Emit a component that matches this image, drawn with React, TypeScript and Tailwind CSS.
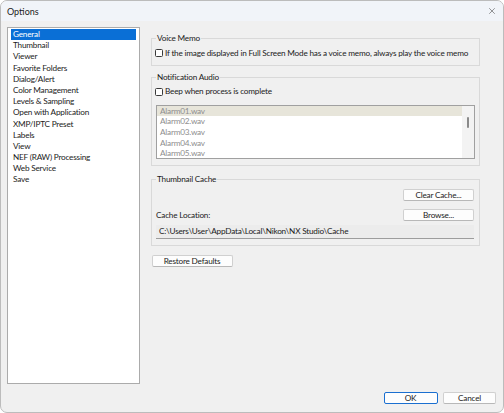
import { X } from "lucide-react";

const categories = [
  "General",
  "Thumbnail",
  "Viewer",
  "Favorite Folders",
  "Dialog/Alert",
  "Color Management",
  "Levels & Sampling",
  "Open with Application",
  "XMP/IPTC Preset",
  "Labels",
  "View",
  "NEF (RAW) Processing",
  "Web Service",
  "Save",
];

const alarms = ["Alarm01.wav", "Alarm02.wav", "Alarm03.wav", "Alarm04.wav", "Alarm05.wav"];

function Checkbox({ label }: { label: string }) {
  return (
    <label className="flex items-center gap-[2px] h-[11px] whitespace-nowrap">
      <span className="w-[8px] h-[8px] rounded-[1.5px] border border-[#3a3a3a] bg-white shrink-0" />
      <span>{label}</span>
    </label>
  );
}

function Button({ children, className = "", primary = false }: { children: string; className?: string; primary?: boolean }) {
  return (
    <button
      className={`h-[12px] flex items-center justify-center rounded-[2px] bg-[#fdfdfd] text-[8.2px] leading-none ${
        primary ? "border border-[#1a6fd0]" : "border border-[#d0d0d0] border-b-[#b8b8b8]"
      } ${className}`}
    >
      {children}
    </button>
  );
}

export default function App() {
  return (
    <div className="w-[504px] h-[413px] flex flex-col bg-[#f0f0f0] border border-[#bcbcbc] rounded-[7px] overflow-hidden text-[8.2px] leading-[11px] tracking-[-0.2px] text-[#1b1b1b] font-['Lato',sans-serif]">
      {/* title bar */}
      <div className="h-[20px] shrink-0 flex items-center justify-between pl-[6px] pr-[6px] bg-[#f1f4f9]">
        <span className="text-[9px] tracking-normal">Options</span>
        <X className="w-[10px] h-[10px] text-[#333]" strokeWidth={1.2} />
      </div>

      <div className="flex pl-[6px] pt-[6px]">
        {/* category list */}
        <div className="w-[133px] h-[357px] border border-[#ababab] bg-white px-[3px] pt-[1px]">
          {categories.map((c, i) => (
            <div
              key={c}
              className={`h-[11.2px] leading-[11.2px] px-[2px] ${i === 0 ? "bg-[#0a6fd6] text-white" : ""}`}
            >
              {c}
            </div>
          ))}
        </div>

        {/* settings */}
        <div className="ml-[11px] w-[329px] flex flex-col">
          <fieldset className="mt-[5.5px] border border-[#d9d9d9] pl-[3px] pr-[4px] pb-[6px]">
            <legend className="ml-[1px] px-[1px] leading-[11px]">Voice Memo</legend>
            <div className="mt-[4px]">
              <Checkbox label="If the image displayed in Full Screen Mode has a voice memo, always play the voice memo" />
            </div>
          </fieldset>

          <fieldset className="mt-[6px] border border-[#d9d9d9] pl-[3px] pr-[4px] pb-[6px]">
            <legend className="ml-[1px] px-[1px] leading-[11px]">Notification Audio</legend>
            <div className="mt-[3.5px]">
              <Checkbox label="Beep when process is complete" />
            </div>
            <div className="mt-[7.5px] ml-[1px] h-[54.5px] border border-[#a0a0a0] bg-white flex">
              <div className="flex-1 text-[#8e8e8e]">
                {alarms.map((a, i) => (
                  <div key={a} className={`h-[10.7px] leading-[10.7px] px-[3px] ${i === 0 ? "bg-[#e7e5da]" : ""}`}>
                    {a}
                  </div>
                ))}
              </div>
              <div className="w-[12px] bg-[#f3f3f3] flex justify-center pt-[11.5px]">
                <div className="w-[2px] h-[11px] rounded-full bg-[#8a8a8a]" />
              </div>
            </div>
          </fieldset>

          <fieldset className="mt-[8px] border border-[#d9d9d9] pl-[3px] pr-[5px] pb-[6px]">
            <legend className="ml-[1px] px-[1px] leading-[11px]">Thumbnail Cache</legend>
            <div className="mt-[4px] flex justify-end">
              <Button className="w-[71px]">Clear Cache...</Button>
            </div>
            <div className="mt-[8px] flex items-center justify-between">
              <span className="ml-[1px]">Cache Location:</span>
              <Button className="w-[71px]">Browse...</Button>
            </div>
            <div className="mt-[4px] ml-[1px] h-[13.5px] bg-[#ececec] border-b-[1.5px] border-[#9d9d9d] px-[3px] flex items-center">
              C:\Users\User\AppData\Local\Nikon\NX Studio\Cache
            </div>
          </fieldset>

          <div className="mt-[9.5px]">
            <Button className="w-[81px] h-[12.5px] ml-[0.5px]">Restore Defaults</Button>
          </div>
        </div>
      </div>

      <div className="mt-[8px] flex justify-end gap-[5.5px] pr-[7px]">
        <Button primary className="w-[54px]">OK</Button>
        <Button className="w-[53px]">Cancel</Button>
      </div>
    </div>
  );
}
